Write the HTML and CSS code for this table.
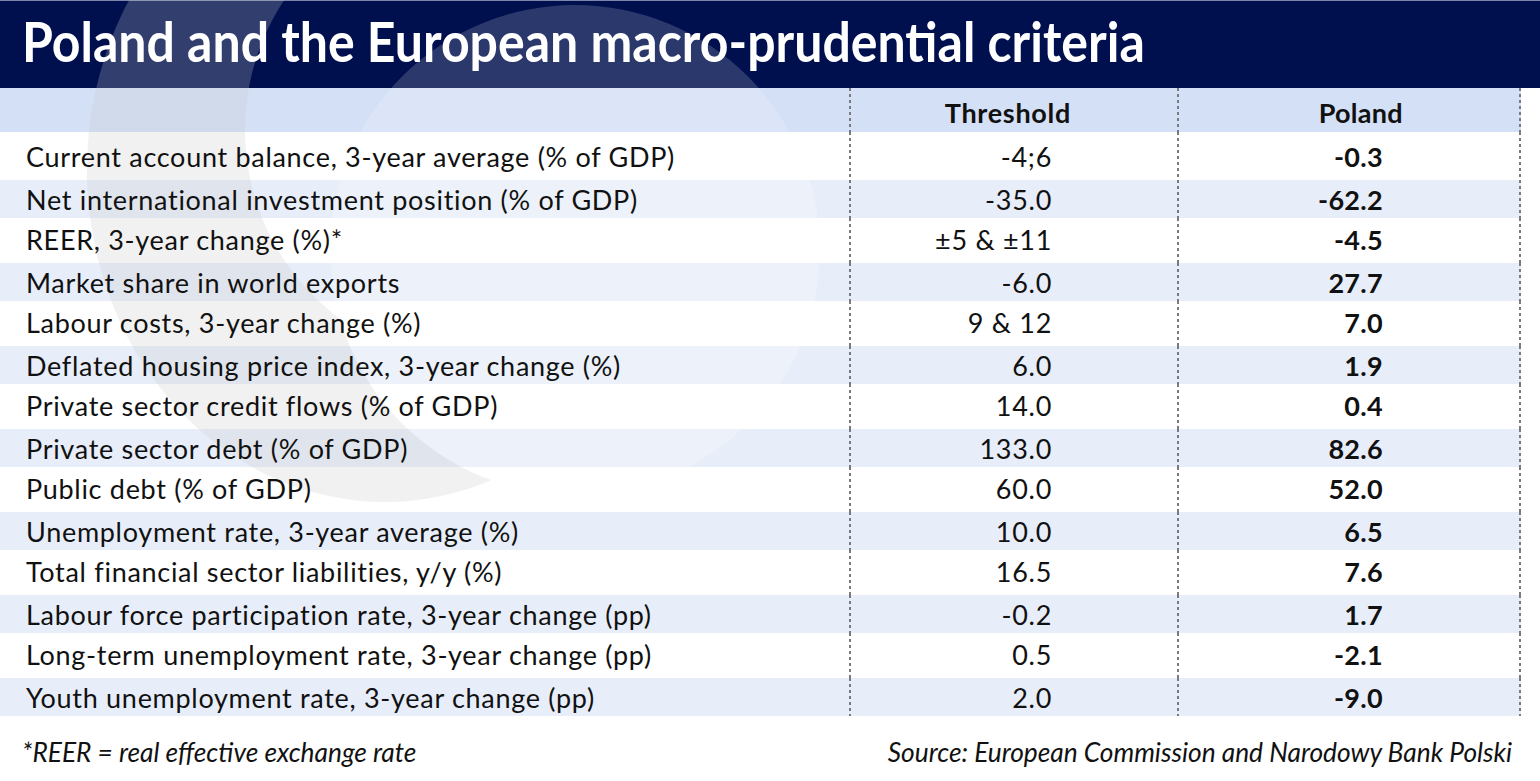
FILE: index.html
```html
<!DOCTYPE html>
<html lang="en">
<head>
<meta charset="utf-8">
<title>Poland and the European macro-prudential criteria</title>
<link rel="stylesheet" href="styles.css">
</head>
<body>
<div class="page">
  <svg class="watermark" width="1540" height="781" viewBox="0 0 1540 781" aria-hidden="true">
    <defs>
      <mask id="ringmask" maskUnits="userSpaceOnUse" x="0" y="0" width="1540" height="781">
        <rect x="0" y="0" width="1540" height="781" fill="#fff"/>
        <circle cx="480" cy="130" r="235" fill="#000"/>
        <circle cx="575" cy="250" r="245" fill="#000"/>
      </mask>
    </defs>
    <ellipse cx="385" cy="170" rx="298" ry="332" fill="rgb(200,200,200)" fill-opacity="0.25" mask="url(#ringmask)"/>
    <circle cx="575" cy="250" r="245" fill="#ffffff" fill-opacity="0.17"/>
  </svg>

  <header class="title-bar">
    <h1 class="title">Poland and the European macro-prudential criteria</h1>
  </header>

  <div class="table">
    <div class="row head">
      <div class="cell label"></div>
      <div class="cell thr">Threshold</div>
      <div class="cell pl">Poland</div>
    </div>
    <div class="row first">
      <div class="cell label">Current account balance, 3-year average (% of GDP)</div>
      <div class="cell thr">-4;6</div>
      <div class="cell pl">-0.3</div>
    </div>
    <div class="row alt">
      <div class="cell label">Net international investment position (% of GDP)</div>
      <div class="cell thr">-35.0</div>
      <div class="cell pl">-62.2</div>
    </div>
    <div class="row">
      <div class="cell label">REER, 3-year change (%)*</div>
      <div class="cell thr">±5 &amp; ±11</div>
      <div class="cell pl">-4.5</div>
    </div>
    <div class="row alt">
      <div class="cell label">Market share in world exports</div>
      <div class="cell thr">-6.0</div>
      <div class="cell pl">27.7</div>
    </div>
    <div class="row">
      <div class="cell label">Labour costs, 3-year change (%)</div>
      <div class="cell thr">9 &amp; 12</div>
      <div class="cell pl">7.0</div>
    </div>
    <div class="row alt">
      <div class="cell label">Deflated housing price index, 3-year change (%)</div>
      <div class="cell thr">6.0</div>
      <div class="cell pl">1.9</div>
    </div>
    <div class="row">
      <div class="cell label">Private sector credit flows (% of GDP)</div>
      <div class="cell thr">14.0</div>
      <div class="cell pl">0.4</div>
    </div>
    <div class="row alt">
      <div class="cell label">Private sector debt (% of GDP)</div>
      <div class="cell thr">133.0</div>
      <div class="cell pl">82.6</div>
    </div>
    <div class="row">
      <div class="cell label">Public debt (% of GDP)</div>
      <div class="cell thr">60.0</div>
      <div class="cell pl">52.0</div>
    </div>
    <div class="row alt">
      <div class="cell label">Unemployment rate, 3-year average (%)</div>
      <div class="cell thr">10.0</div>
      <div class="cell pl">6.5</div>
    </div>
    <div class="row">
      <div class="cell label">Total financial sector liabilities, y/y (%)</div>
      <div class="cell thr">16.5</div>
      <div class="cell pl">7.6</div>
    </div>
    <div class="row alt">
      <div class="cell label">Labour force participation rate, 3-year change (pp)</div>
      <div class="cell thr">-0.2</div>
      <div class="cell pl">1.7</div>
    </div>
    <div class="row">
      <div class="cell label">Long-term unemployment rate, 3-year change (pp)</div>
      <div class="cell thr">0.5</div>
      <div class="cell pl">-2.1</div>
    </div>
    <div class="row alt">
      <div class="cell label">Youth unemployment rate, 3-year change (pp)</div>
      <div class="cell thr">2.0</div>
      <div class="cell pl">-9.0</div>
    </div>
  </div>

  <footer class="notes">
    <span class="note">*REER = real effective exchange rate</span>
    <span class="note">Source: European Commission and Narodowy Bank Polski</span>
  </footer>
</div>
</body>
</html>
```

FILE: styles.css
```css
* { box-sizing: border-box; }

html, body {
  margin: 0;
  padding: 0;
  background: #ffffff;
}

body {
  font-family: Lato, "Open Sans", "Liberation Sans", sans-serif;
  color: #111111;
}

.page {
  position: relative;
  width: 1540px;
  height: 781px;
  overflow: hidden;
}

.watermark {
  position: absolute;
  left: 0;
  top: 0;
  z-index: 1;
  pointer-events: none;
}

.title-bar {
  height: 88px;
  background: #00104f;
  border-top: 1px solid #7d86aa;
  display: flex;
  align-items: flex-start;
  padding: 12px 0 0 22px;
}

.title {
  position: relative;
  z-index: 2;
  margin: 0;
  font-size: 56px;
  font-weight: 700;
  color: #ffffff;
  line-height: 56px;
  white-space: nowrap;
  transform: scaleX(0.893);
  transform-origin: left center;
}

.table {
  width: 1521px;
  display: flex;
  flex-direction: column;
}

.row {
  display: grid;
  grid-template-columns: 849px 328px 344px;
  height: 45px;
}

.row.head {
  height: 44px;
  background: #d4e0f6;
}

.row.first {
  height: 48px;
  padding-top: 3px;
}

.row.alt {
  height: 38px;
  background: #e8eef9;
}

.cell {
  position: relative;
  z-index: 2;
  display: flex;
  align-items: center;
  font-size: 27px;
  letter-spacing: 0.7px;
  line-height: 1;
  white-space: nowrap;
  padding-bottom: 3px;
}

.row.alt .cell {
  padding-bottom: 0;
}

.cell.label {
  padding-left: 26px;
}

.cell.thr,
.cell.pl {
  justify-content: flex-end;
  background-image: repeating-linear-gradient(to bottom, #7a7a82 0 3px, transparent 3px 6px);
  background-size: 2px 100%;
  background-repeat: no-repeat;
  background-position: left top;
}

.row.first .cell.thr,
.row.first .cell.pl {
  margin-top: -3px;
  padding-top: 3px;
}

.cell.thr {
  padding-right: 125px;
}

.cell.pl {
  padding-right: 138px;
  font-weight: 700;
  letter-spacing: 0.3px;
  background-image:
    repeating-linear-gradient(to bottom, #7a7a82 0 3px, transparent 3px 6px),
    repeating-linear-gradient(to bottom, #7a7a82 0 3px, transparent 3px 6px);
  background-size: 2px 100%, 2px 100%;
  background-position: left top, right top;
}

.row.head .cell {
  font-weight: 700;
  padding-top: 4px;
  padding-bottom: 0;
}

.row.head .cell.thr {
  padding-right: 106px;
}

.row.head .cell.pl {
  padding-right: 118px;
}

.notes {
  position: relative;
  z-index: 2;
  display: flex;
  justify-content: space-between;
  align-items: center;
  height: 65px;
  padding: 8px 28px 0 22px;
}

.note {
  font-size: 26.3px;
  font-style: italic;
  line-height: 1;
  color: #111111;
}
```
